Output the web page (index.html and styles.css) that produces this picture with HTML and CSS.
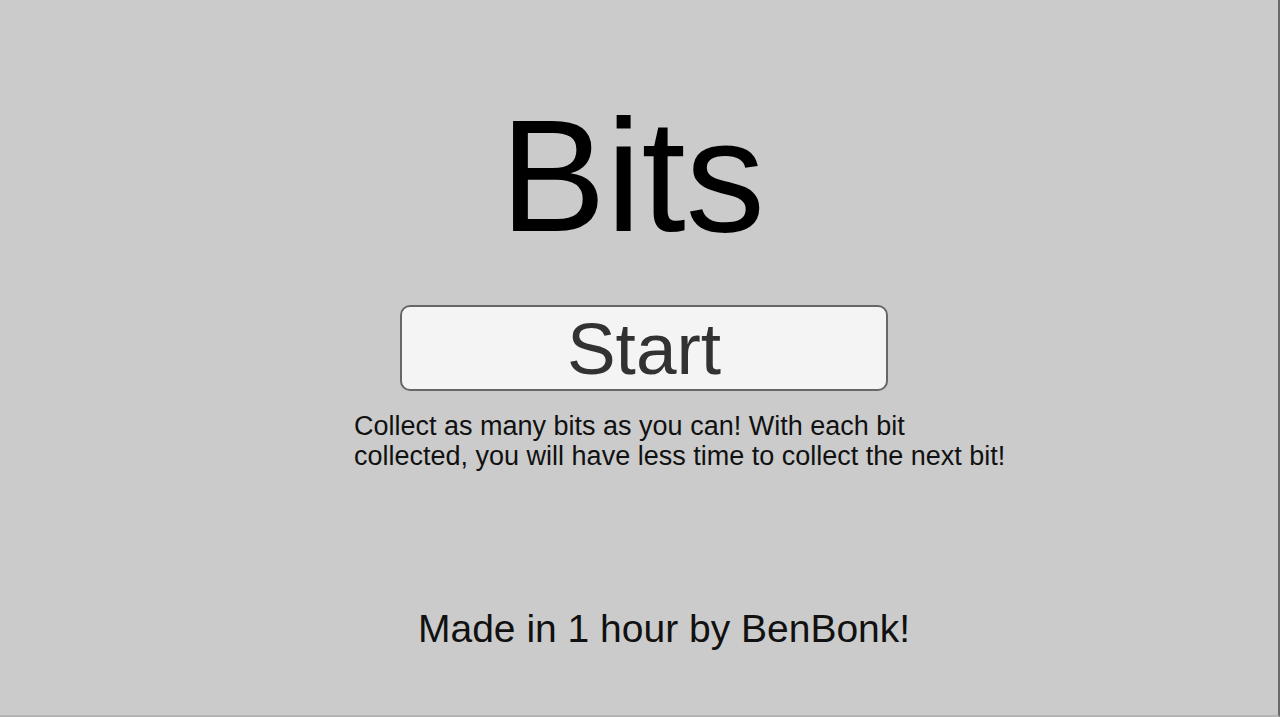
FILE: index.html
```html
<!DOCTYPE html>
<html>
<head>
<meta charset="utf-8">
<link rel="stylesheet" href="styles.css">
</head>
<body>
<div class="screen">
  <h1 class="title">Bits</h1>
  <button class="start">Start</button>
  <p class="desc">Collect as many bits as you can! With each bit<br>collected, you will have less time to collect the next bit!</p>
  <p class="credit">Made in 1 hour by BenBonk!</p>
</div>
</body>
</html>
```
FILE: styles.css
```css
html, body {
  margin: 0;
  padding: 0;
}
body {
  background: #cbcbcb;
  font-family: "Liberation Sans", Arial, sans-serif;
}
.screen {
  width: 1280px;
  height: 717px;
  box-sizing: border-box;
  border-right: 2px solid #6a6a6a;
  border-bottom: 2px solid #b4b4b4;
  display: flex;
  flex-direction: column;
  align-items: flex-start;
  overflow: hidden;
}
.title {
  margin: 98px 0 0 500px;
  font-size: 159px;
  line-height: 157px;
  font-weight: normal;
  color: #000;
}
.start {
  margin: 50px 0 0 400px;
  width: 488px;
  height: 86px;
  box-sizing: border-box;
  border: 2px solid #676767;
  border-radius: 10px;
  background: #f4f4f4;
  font-family: "Liberation Sans", Arial, sans-serif;
  font-size: 73px;
  line-height: 1;
  color: #323232;
  padding: 0;
}
.desc {
  margin: 20px 0 0 354px;
  font-size: 27px;
  line-height: 30px;
  color: #111;
  white-space: nowrap;
}
.credit {
  margin: 0 0 0 418px;
  margin-top: auto;
  margin-bottom: 67px;
  font-size: 39px;
  line-height: 39px;
  color: #111;
  white-space: nowrap;
}
```
